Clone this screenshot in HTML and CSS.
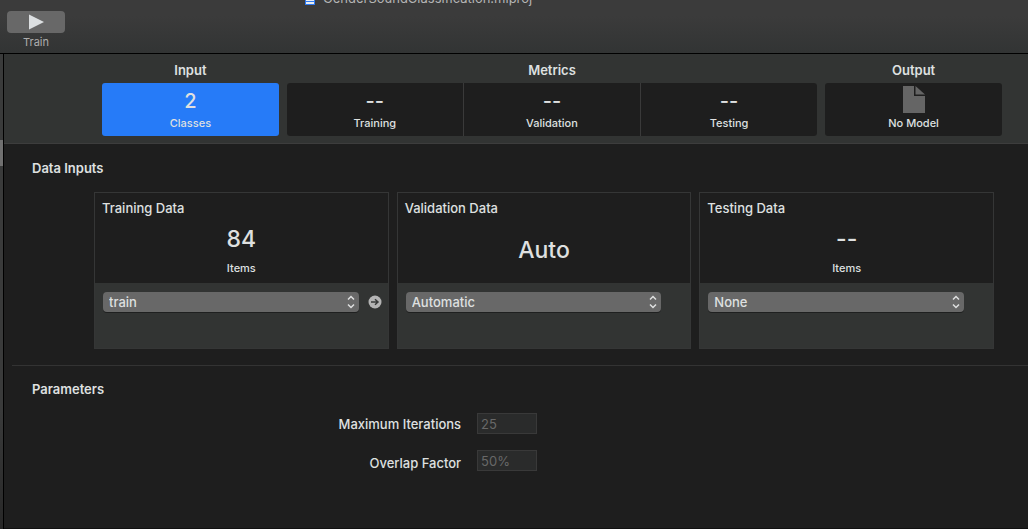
FILE: index.html
```html
<!DOCTYPE html>
<html lang="en">
<head>
<meta charset="utf-8">
<title>GenderSoundClassification.mlproj</title>
<link rel="stylesheet" href="styles.css">
</head>
<body>
<div class="window">
  <header class="toolbar">
    <div class="tool">
      <button class="train-button" type="button" aria-labelledby="train-label">
        <svg width="16" height="16" viewBox="0 0 16 16" aria-hidden="true"><path d="M1 0.5L16 8L1 15.5z" fill="#dcdfe1"/></svg>
      </button>
      <span class="tool-label" id="train-label">Train</span>
    </div>
    <div class="document-title">
      <svg width="10" height="14" viewBox="0 0 10 14" aria-hidden="true"><path d="M0 0h10v14H0z" fill="#2f7af0"/><path d="M1 1h8v9H1zM1 11h8v2H1z" fill="#e8edf3"/></svg>
      <span>GenderSoundClassification.mlproj</span>
    </div>
  </header>
  <div class="workspace">
    <aside class="sidebar"><div class="sidebar-selection"></div></aside>
    <main class="content">
      <nav class="stages">
        <section class="stage">
          <h2 class="stage-title">Input</h2>
          <div class="tabs">
            <button class="tab tab-selected" type="button"><span class="tab-value">2</span><span class="tab-label">Classes</span></button>
          </div>
        </section>
        <section class="stage">
          <h2 class="stage-title">Metrics</h2>
          <div class="tabs">
            <button class="tab" type="button"><span class="tab-value">--</span><span class="tab-label">Training</span></button>
            <button class="tab" type="button"><span class="tab-value">--</span><span class="tab-label">Validation</span></button>
            <button class="tab" type="button"><span class="tab-value">--</span><span class="tab-label">Testing</span></button>
          </div>
        </section>
        <section class="stage">
          <h2 class="stage-title">Output</h2>
          <div class="tabs">
            <button class="tab" type="button">
              <span class="tab-value"><svg width="22" height="27" viewBox="0 0 22 27" aria-hidden="true"><path d="M0 0h11v10h11v17H0z" fill="#656565"/><path d="M12.500 0L22 8.500H12.500z" fill="#656565"/></svg></span>
              <span class="tab-label">No Model</span>
            </button>
          </div>
        </section>
      </nav>

      <section class="data-inputs">
        <h2 class="section-title">Data Inputs</h2>
        <div class="cards">
          <article class="card">
            <div class="card-summary">
              <h3 class="card-title"><label for="training-source">Training Data</label></h3>
              <div class="card-figure"><span class="card-value">84</span><span class="card-unit">Items</span></div>
            </div>
            <div class="card-source">
              <div class="popup">
                <select id="training-source"><option>train</option></select>
                <svg class="popup-arrows" width="8" height="14" viewBox="0 0 8 14" aria-hidden="true"><path d="M1 4.500L4 1.500L7 4.500M1 9.500L4 12.500L7 9.500"/></svg>
              </div>
              <button class="reveal" type="button" aria-label="Show training data">
                <svg width="14" height="14" viewBox="0 0 14 14" aria-hidden="true"><circle cx="7" cy="7" r="6.500" fill="#b4b4b4"/><path d="M3 7h7M7 4.200L10 7L7 9.800" fill="none" stroke="#3a3c3b" stroke-width="1.500"/></svg>
              </button>
            </div>
          </article>
          <article class="card">
            <div class="card-summary">
              <h3 class="card-title"><label for="validation-source">Validation Data</label></h3>
              <div class="card-figure card-figure-single"><span class="card-value">Auto</span></div>
            </div>
            <div class="card-source">
              <div class="popup">
                <select id="validation-source"><option>Automatic</option></select>
                <svg class="popup-arrows" width="8" height="14" viewBox="0 0 8 14" aria-hidden="true"><path d="M1 4.500L4 1.500L7 4.500M1 9.500L4 12.500L7 9.500"/></svg>
              </div>
            </div>
          </article>
          <article class="card">
            <div class="card-summary">
              <h3 class="card-title"><label for="testing-source">Testing Data</label></h3>
              <div class="card-figure"><span class="card-value">--</span><span class="card-unit">Items</span></div>
            </div>
            <div class="card-source">
              <div class="popup">
                <select id="testing-source"><option>None</option></select>
                <svg class="popup-arrows" width="8" height="14" viewBox="0 0 8 14" aria-hidden="true"><path d="M1 4.500L4 1.500L7 4.500M1 9.500L4 12.500L7 9.500"/></svg>
              </div>
            </div>
          </article>
        </div>
      </section>

      <section class="parameters">
        <h2 class="section-title">Parameters</h2>
        <div class="fields">
          <div class="field">
            <label for="iterations">Maximum Iterations</label>
            <input id="iterations" type="text" value="25" disabled>
          </div>
          <div class="field">
            <label for="overlap">Overlap Factor</label>
            <input id="overlap" type="text" value="50%" disabled>
          </div>
        </div>
      </section>
    </main>
  </div>
</div>
</body>
</html>
```

FILE: styles.css
```css
* {
  box-sizing: border-box;
}

body {
  margin: 0;
  background: #1e1e1e;
  color: #dfe0e0;
  font: 500 13px/16px Inter, "Liberation Sans", sans-serif;
}

h2,
h3 {
  margin: 0;
  font-size: 13px;
  line-height: 16px;
}

button,
select,
input {
  margin: 0;
  border: 0;
  color: inherit;
  font: inherit;
}

svg {
  display: block;
}

.window {
  display: flex;
  flex-direction: column;
  min-height: 100vh;
  overflow: hidden;
}

/* Toolbar */

.toolbar {
  display: flex;
  align-items: flex-start;
  gap: 240px;
  height: 54px;
  padding-left: 7px;
  border-bottom: 1px solid #000;
  background: linear-gradient(#3b3b3b 30%, #323434);
}

.tool {
  display: flex;
  flex-direction: column;
  align-items: center;
  gap: 2px;
  padding-top: 11px;
}

.train-button {
  display: flex;
  align-items: center;
  justify-content: center;
  width: 58px;
  height: 22px;
  padding: 0;
  border-radius: 4px;
  background: #686868;
}

.tool-label {
  color: #adadad;
  font-size: 11px;
  font-weight: 400;
  line-height: 14px;
}

.document-title {
  display: flex;
  align-items: center;
  gap: 8px;
  margin-top: -10px;
  color: #b4b4b4;
  font-weight: 400;
  line-height: 16px;
}

/* Workspace */

.workspace {
  display: flex;
  flex: 1;
}

.sidebar {
  width: 4px;
  padding-top: 86px;
  border-right: 1px solid #000;
  background: linear-gradient(#3a3b3b 75%, #282828);
}

.sidebar-selection {
  height: 26px;
  background: #707070;
}

.content {
  flex: 1;
  min-width: 0;
  border-bottom: 1px solid #111;
}

/* Stage tabs */

.stages {
  display: grid;
  grid-template-columns: 1fr 3fr 1fr;
  gap: 8px;
  padding: 8px 26px 7px 98px;
  border-bottom: 1px solid #3d3d3d;
  background: #323433;
}

.stage-title {
  margin-bottom: 5px;
  font-weight: 600;
  text-align: center;
}

.tabs {
  display: flex;
  gap: 1px;
  overflow: hidden;
  border-radius: 3px;
  background: #3a3a3a;
}

.tab {
  display: flex;
  flex: 1;
  flex-direction: column;
  align-items: center;
  height: 53px;
  padding: 3px 0 0;
  background: #1e1e1e;
}

.tab-selected {
  background: #267bf8;
}

.tab-value {
  height: 30px;
  font-size: 20px;
  line-height: 30px;
}

.tab-label {
  font-size: 11px;
  line-height: 14px;
}

/* Data inputs */

.section-title {
  padding-left: 20px;
  font-weight: 600;
}

.data-inputs {
  margin-left: 8px;
  padding: 16px 34px 16px 0;
  border-bottom: 1px solid #333;
}

.cards {
  display: grid;
  grid-template-columns: repeat(3, 1fr);
  gap: 8px;
  margin-top: 16px;
  padding-left: 82px;
}

.card {
  border: 1px solid #353636;
}

.card-summary {
  display: flex;
  flex-direction: column;
  height: 90px;
  padding: 7px 7px 8px;
}

.card-title {
  font-weight: 500;
}

.card-figure {
  display: flex;
  flex: 1;
  flex-direction: column;
  align-items: center;
  justify-content: center;
}

.card-figure-single {
  padding-top: 8px;
}

.card-value {
  font-size: 23px;
  line-height: 44px;
}

.card-unit {
  font-size: 11px;
  line-height: 14px;
}

.card-source {
  display: grid;
  grid-template-columns: 1fr 14px;
  align-items: center;
  align-content: start;
  gap: 9px;
  height: 65px;
  padding: 9px 6px 0 8px;
  background: #323433;
}

.popup {
  position: relative;
}

.popup select {
  display: block;
  width: 100%;
  height: 20px;
  padding: 0 20px 0 6px;
  border-radius: 4px;
  background: #686868;
  box-shadow: 0 1px 0 #1f2020;
  line-height: 20px;
  appearance: none;
}

.popup-arrows {
  position: absolute;
  top: 3px;
  right: 4px;
  fill: none;
  stroke: #dfe0e0;
  stroke-width: 1.5px;
  pointer-events: none;
}

.reveal {
  padding: 0;
  background: none;
}

/* Parameters */

.parameters {
  margin-left: 8px;
  padding: 15px 2px 16px 0;
}

.fields {
  display: grid;
  gap: 16px;
  margin-top: 16px;
}

.field {
  display: grid;
  grid-template-columns: 9fr 11fr;
  align-items: center;
  gap: 16px;
}

.field:last-child {
  align-items: end;
}

.field label {
  text-align: right;
}

.field input {
  width: 60px;
  height: 21px;
  padding: 0 3px;
  border: 1px solid #393939;
  background: #2a2b2b;
  color: #686868;
  font-weight: 400;
}
```
